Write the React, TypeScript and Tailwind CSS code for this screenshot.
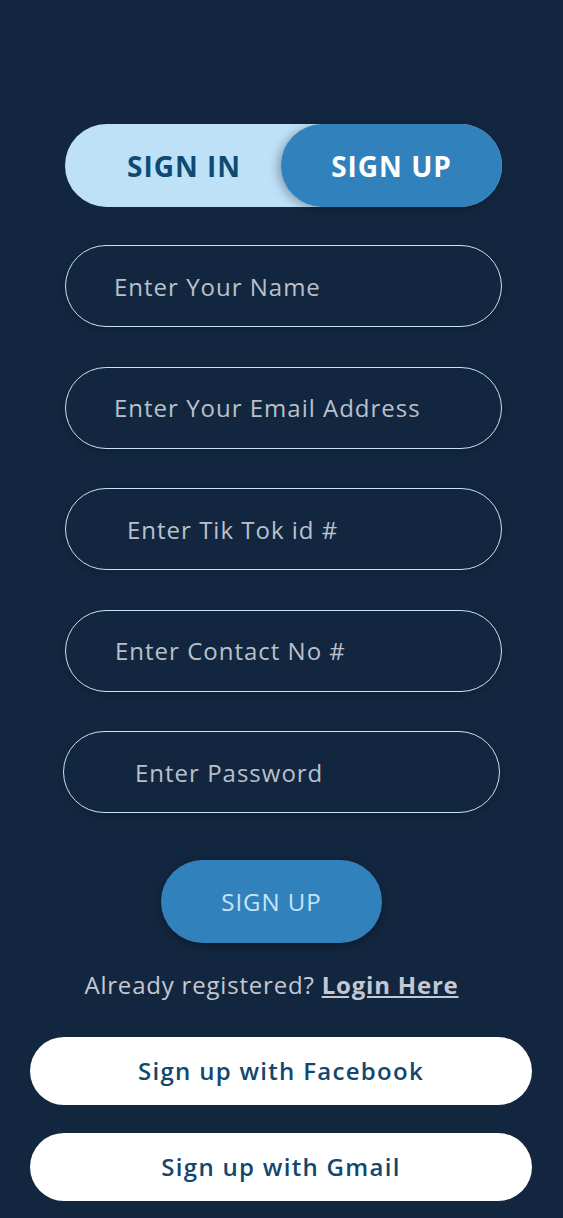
import { useState } from "react";

const fields = [
  { placeholder: "Enter Your Name", pad: "pl-[48px]", box: "ml-[65px]" },
  { placeholder: "Enter Your Email Address", pad: "pl-[48px]", box: "ml-[65px]" },
  { placeholder: "Enter Tik Tok id #", pad: "pl-[61px]", box: "ml-[65px]" },
  { placeholder: "Enter Contact No #", pad: "pl-[49px]", box: "ml-[65px]" },
  { placeholder: "Enter Password", pad: "pl-[71px]", box: "ml-[63px]" },
];

export default function App() {
  const [tab, setTab] = useState<"in" | "up">("up");

  return (
    <div className="min-h-[1218px] w-full bg-[#13263f] font-['Open_Sans',sans-serif] pt-[124px]">
      <div className="ml-[65px] flex h-[83px] w-[437px] rounded-full bg-[#bee1f8]">
        <button
          onClick={() => setTab("in")}
          className={`flex h-full w-[216px] items-center justify-center rounded-full pl-[22px] text-[28px] font-bold tracking-[1px] ${tab === "in" ? "bg-[#3182bc] text-white shadow-[-4px_2px_8px_rgba(0,0,0,0.25)]" : "text-[#0f4a73]"}`}
        >
          SIGN IN
        </button>
        <button
          onClick={() => setTab("up")}
          className={`flex h-full w-[221px] items-center justify-center rounded-full text-[28px] font-bold tracking-[1px] ${tab === "up" ? "bg-[#3182bc] text-white shadow-[-4px_2px_8px_rgba(0,0,0,0.25)]" : "text-[#0f4a73]"}`}
        >
          SIGN UP
        </button>
      </div>

      <div className="mt-[38px] flex flex-col gap-[39.5px]">
        {fields.map((f, i) => (
          <input
            key={i}
            placeholder={f.placeholder}
            className={`${f.box} ${f.pad} h-[82px] w-[437px] rounded-full border-[1.5px] border-[#c3e3f9] bg-transparent text-[24px] tracking-[1px] text-[#d0d5dd] outline-none placeholder:text-[#b9c0cc] shadow-[0_2px_6px_rgba(0,0,0,0.2)]`}
          />
        ))}
      </div>

      <div className="mt-[47px] flex justify-center pr-[20px]">
        <button className="h-[83px] w-[221px] rounded-full bg-[#3182bc] text-[24px] tracking-[1px] text-[#c6e4f7] shadow-[0_3px_8px_rgba(0,0,0,0.3)]">
          SIGN UP
        </button>
      </div>

      <p className="mt-[24px] text-center pr-[20px] text-[24px] tracking-[0.8px] text-[#c3c8d2]">
        Already registered?{" "}
        <a className="font-bold underline text-[#c3c8d2]">Login Here</a>
      </p>

      <div className="mt-[34px] flex flex-col gap-[28px] px-[30px]">
        <button className="h-[68px] w-[502px] rounded-full bg-white text-[24px] font-semibold tracking-[1.3px] text-[#12476f]">
          Sign up with Facebook
        </button>
        <button className="h-[68px] w-[502px] rounded-full bg-white text-[24px] font-semibold tracking-[1.3px] text-[#12476f]">
          Sign up with Gmail
        </button>
      </div>
    </div>
  );
}
